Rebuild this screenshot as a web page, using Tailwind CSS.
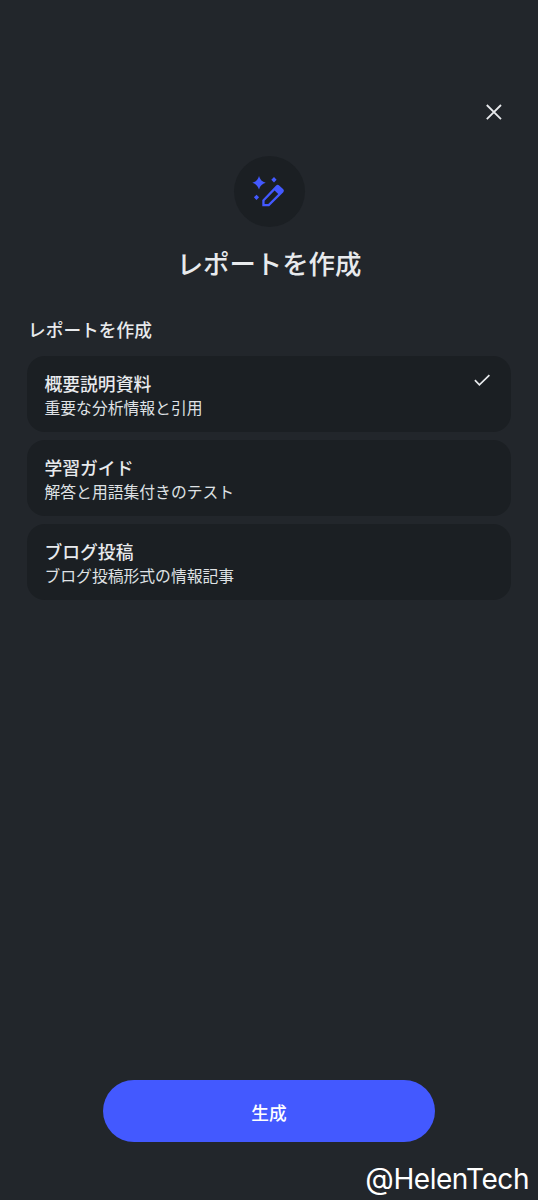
<!DOCTYPE html>
<html lang="ja">
<head>
<meta charset="utf-8">
<title>レポートを作成</title>
<script src="https://cdn.jsdelivr.net/npm/@tailwindcss/browser@4"></script>
</head>
<body class="bg-[#22262b]">
<main class="relative flex h-[1200px] w-[538px] flex-col overflow-hidden bg-[#22262b] px-[27px] pt-[100px] font-['Noto_Sans_CJK_JP',sans-serif] text-[#e8eaed]">
  <header class="flex justify-end pr-[5.5px]">
    <button class="flex size-6 items-center justify-center" aria-label="閉じる">
      <svg class="size-6" viewBox="0 0 24 24" fill="none" stroke="#e8eaed" stroke-width="1.8"><path d="M4.8 5 19 19.2M19 5 4.8 19.2"/></svg>
    </button>
  </header>
  <div class="mt-[32px] flex size-[71px] items-center justify-center self-center rounded-full bg-[#1b1f23]">
    <svg class="size-9" viewBox="0 0 36 36" fill="#4359ff">
      <path d="M8 2Q9.4 7.4 14.7 8.8Q9.4 10.2 8 15.6Q6.6 10.2 1.3 8.8Q6.6 7.4 8 2Z"/>
      <path d="M23 3.1 25.6 5.8 23 8.5 20.3 5.8ZM5.5 20.7 8.1 23.3 5.5 25.9 2.9 23.3Z"/>
      <path fill-rule="evenodd" d="M11.3 32.3V25.9L25.1 11.5Q26.6 10.2 28.2 11.4L32.3 15.3Q33.6 16.8 32.3 18.3L18.2 32.3ZM13.6 30H17.2L27.2 20 23.6 16.4 13.6 26.7Z"/>
    </svg>
  </div>
  <h1 class="mt-[16px] text-center text-[26.4px] leading-10 font-medium">レポートを作成</h1>
  <h2 class="mt-[34px] pl-px text-[17.7px] leading-6 font-medium">レポートを作成</h2>
  <ul class="mt-[15px] flex w-[484px] flex-col gap-2">
    <li class="flex h-[76px] justify-between rounded-[18px] bg-[#1b1f23] pt-[15px] pr-5 pl-[17.5px]">
      <div>
        <h3 class="text-[17.8px] leading-[25px] font-medium">概要説明資料</h3>
        <p class="text-[15.8px] leading-[24px] text-[#dfe1e4]">重要な分析情報と引用</p>
      </div>
      <svg class="h-[18px] w-[18px]" viewBox="0 0 18 18" fill="none" stroke="#e8eaed" stroke-width="1.7"><path d="m1.9 9.2 4.5 4.6L16.4 4.2"/></svg>
    </li>
    <li class="h-[76px] rounded-[18px] bg-[#1b1f23] pt-[15px] pl-[17.5px]">
      <h3 class="text-[17.8px] leading-[25px] font-medium">学習ガイド</h3>
      <p class="text-[15.8px] leading-[24px] text-[#dfe1e4]">解答と用語集付きのテスト</p>
    </li>
    <li class="h-[76px] rounded-[18px] bg-[#1b1f23] pt-[15px] pl-[17.5px]">
      <h3 class="text-[17.8px] leading-[25px] font-medium">ブログ投稿</h3>
      <p class="text-[15.8px] leading-[24px] text-[#dfe1e4]">ブログ投稿形式の情報記事</p>
    </li>
  </ul>
  <button class="mt-auto mb-[58px] flex h-[62px] w-[332px] items-center justify-center self-center rounded-full bg-[#4359ff] pt-0.5 text-[17.7px] font-medium text-white">生成</button>
  <div class="absolute right-[9px] bottom-[3px] flex items-baseline font-['Inter',sans-serif] text-[28px] leading-9 tracking-[-0.45px] text-white"><span class="text-[29.5px]">@</span><span>HelenTech</span></div>
</main>
</body>
</html>
